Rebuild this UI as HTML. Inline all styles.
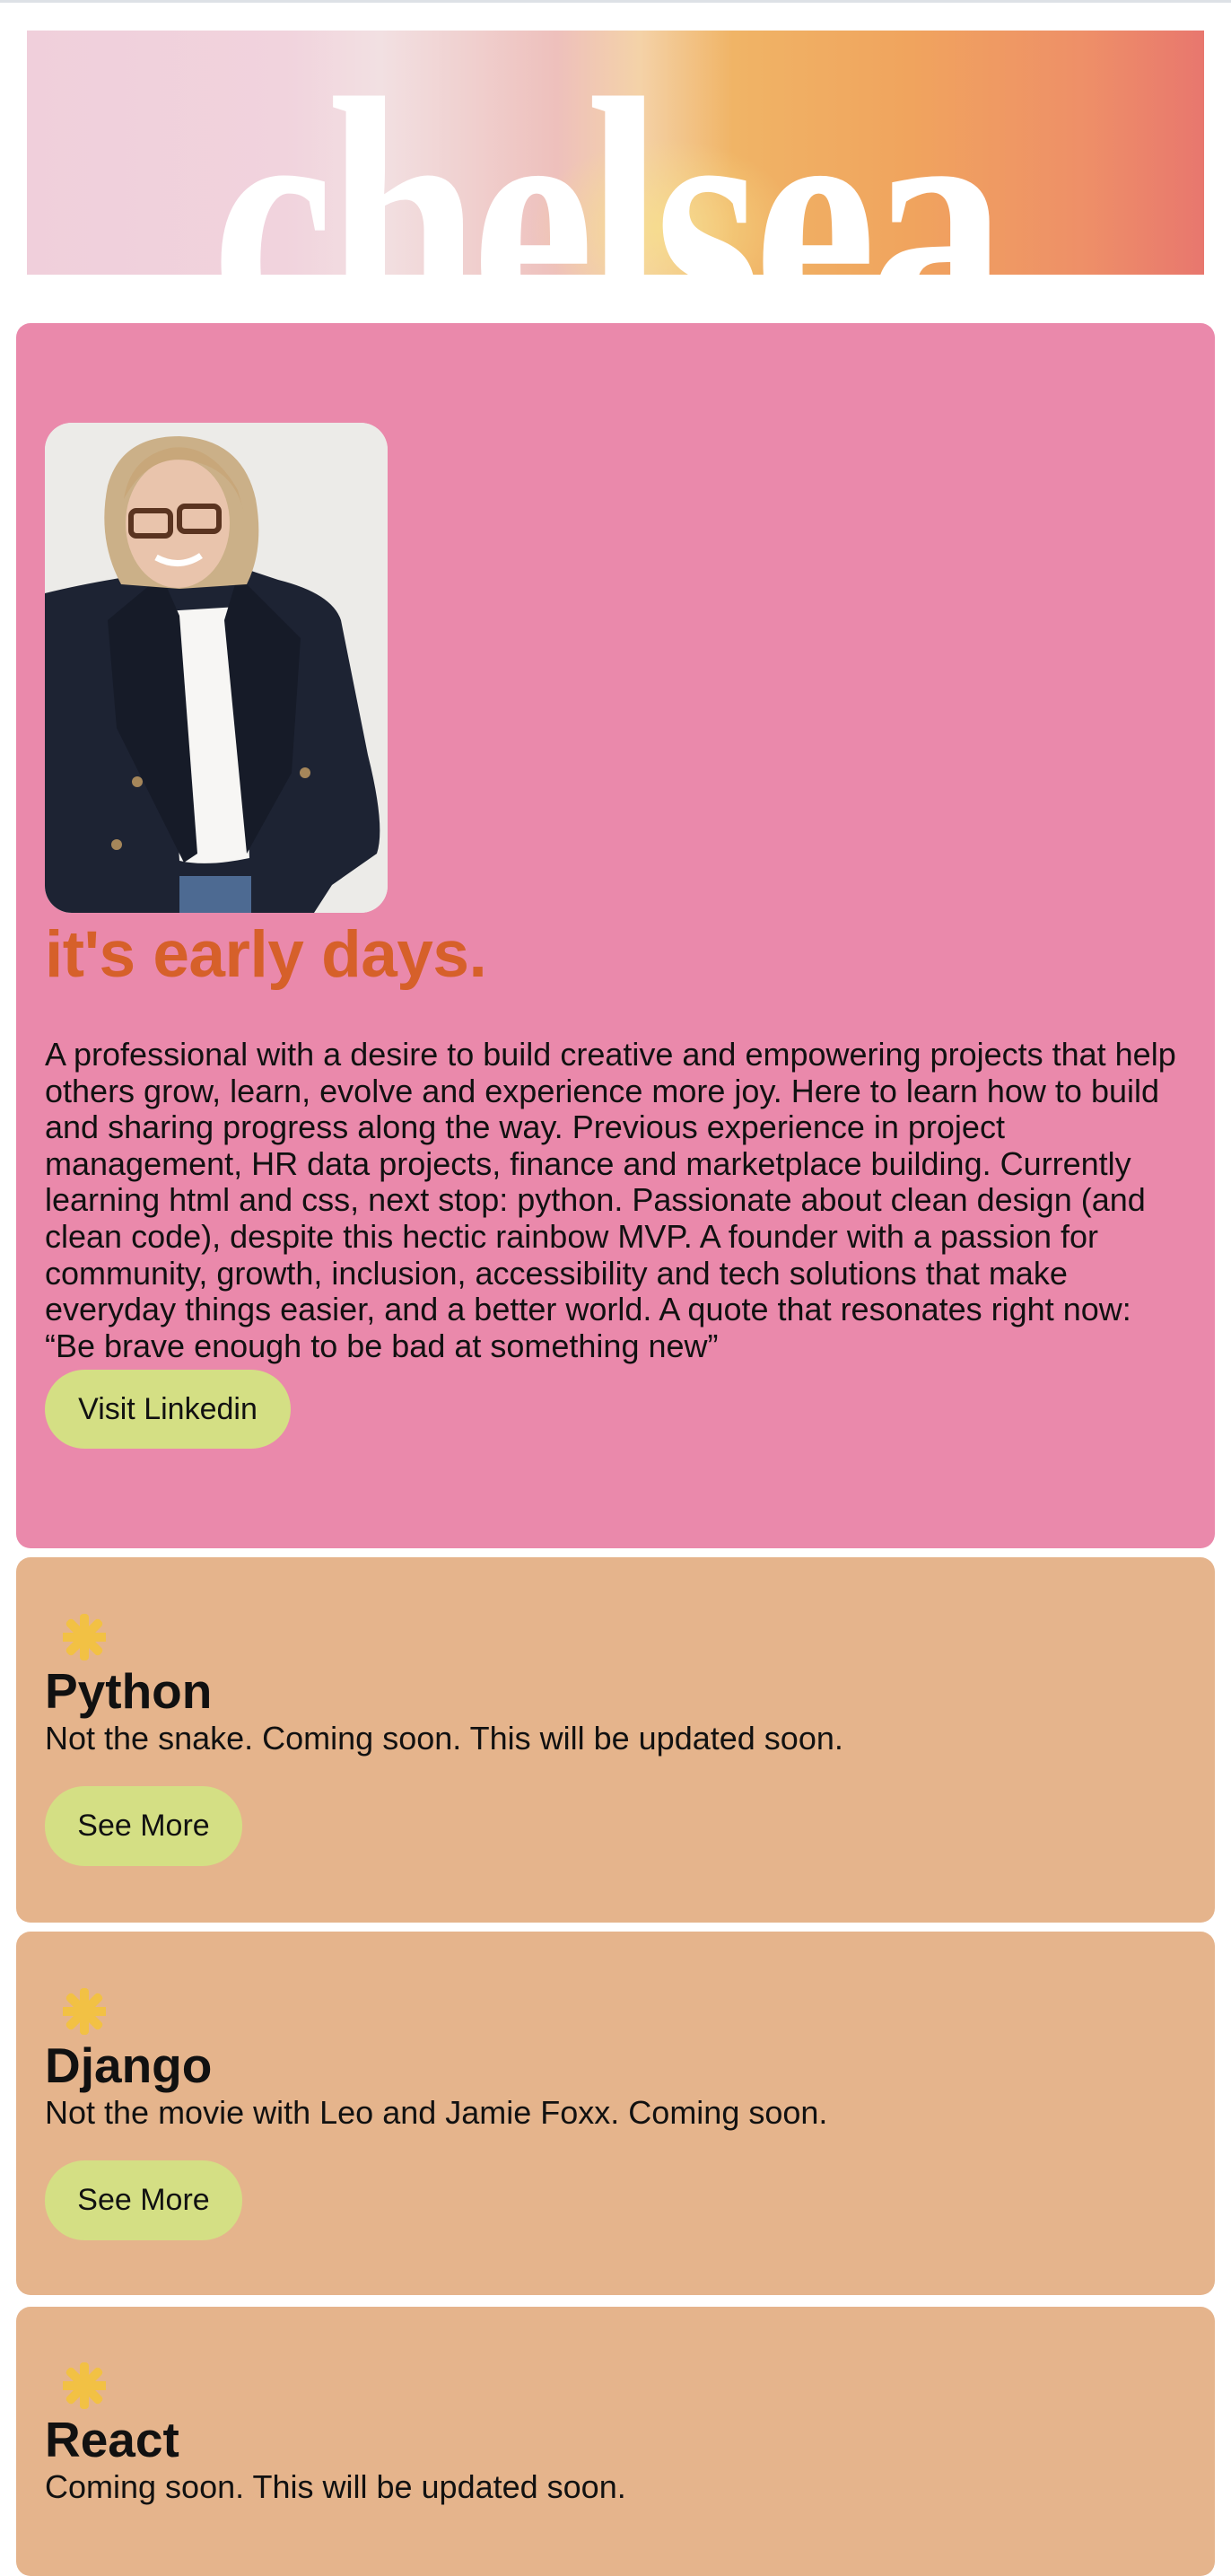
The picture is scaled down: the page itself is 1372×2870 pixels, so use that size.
<!DOCTYPE html>
<html><head><meta charset="utf-8">
<style>
*{margin:0;padding:0;box-sizing:border-box}
html,body{width:1372px;height:2812px;overflow:hidden;background:#fff;font-family:"Liberation Sans",Arial,sans-serif;color:#111}
.topline{position:absolute;left:0;top:0;width:1372px;height:3px;background:#dde1e6}
.banner{position:absolute;left:30px;top:34px;width:1312px;height:272px;overflow:hidden;
background:linear-gradient(90deg,#f0cfdb 0%,#f1d3dd 22%,#f2e0e2 30%,#eec0bc 45%,#f4d2a8 52%,#f0b466 60%,#f0a45e 75%,#ee8f68 90%,#e8776e 100%)}
.banner .glow{position:absolute;left:560px;top:120px;width:300px;height:200px;background:radial-gradient(ellipse at center,rgba(247,224,140,.8),rgba(247,224,140,0) 70%)}
.banner .word{position:absolute;left:206px;top:16px;font-family:"Liberation Serif",serif;font-weight:bold;font-size:400px;line-height:400px;color:#fff;transform:scaleX(.77);transform-origin:0 0;letter-spacing:-12px;white-space:nowrap}
.card{position:absolute;left:18px;width:1336px;border-radius:16px}
.pink{top:360px;height:1365px;background:#ea89ab}
.orange{background:#e5b48c}
.photo{position:absolute;left:50px;top:471px;width:382px;height:546px;border-radius:30px;overflow:hidden;background:#ecebe8}
h1{position:absolute;left:50px;top:1022px;font-size:73px;font-weight:bold;color:#d6602a;letter-spacing:-0.5px}
.para{position:absolute;left:50px;top:1155px;width:1262px;font-size:36px;line-height:40.6px}
.btn{position:absolute;left:50px;background:#d4df84;border-radius:44px;font-size:34px;display:flex;align-items:center;justify-content:center;color:#111}
.star{position:absolute;left:70px;width:48px;height:52px}
h2{position:absolute;left:50px;font-size:55px;font-weight:bold;color:#111}
.sub{position:absolute;left:50px;font-size:36px}
</style></head><body>
<div class="topline"></div>
<div class="banner"><div class="glow"></div><div class="word">chelsea</div></div>

<div class="card pink"></div>
<div class="photo">
<svg width="382" height="546" viewBox="0 0 382 546">
<rect width="382" height="546" fill="#ecebe8"/>
<path d="M0 190 Q40 180 90 172 L130 160 L150 175 L215 160 L260 175 Q320 190 330 220 L360 370 Q380 450 370 480 L320 515 L300 546 L0 546 Z" fill="#1d2333"/>
<path d="M133 210 L215 205 L228 485 Q180 495 150 488 Z" fill="#f7f6f4"/>
<path d="M130 170 L150 215 L170 480 L155 490 L80 340 L70 220 Z" fill="#161b28"/>
<path d="M215 170 L200 220 L225 480 L275 390 L285 240 Z" fill="#161b28"/>
<rect x="150" y="505" width="80" height="46" fill="#4d6a92"/>
<path d="M70 70 Q85 15 150 15 Q220 18 235 85 Q245 140 225 180 L150 185 L85 180 Q58 130 70 70 Z" fill="#cbb088"/>
<ellipse cx="148" cy="112" rx="58" ry="72" fill="#e9c4ac"/>
<path d="M88 85 Q115 35 160 42 Q210 50 222 100 L215 75 Q185 22 140 28 Q95 38 88 85 Z" fill="#c8a77a"/>
<rect x="96" y="98" width="44" height="28" rx="6" fill="none" stroke="#5a3420" stroke-width="6"/>
<rect x="150" y="93" width="44" height="28" rx="6" fill="none" stroke="#5a3420" stroke-width="6"/>
<path d="M124 150 Q150 164 174 148" stroke="#fff" stroke-width="7" fill="none"/>
<circle cx="103" cy="400" r="6" fill="#a5865a"/><circle cx="290" cy="390" r="6" fill="#a5865a"/><circle cx="80" cy="470" r="6" fill="#a5865a"/>
</svg></div>
<h1>it's early days.</h1>
<div class="para">A professional with a desire to build creative and empowering projects that help others grow, learn, evolve and experience more joy. Here to learn how to build and sharing progress along the way. Previous experience in project management, HR data projects, finance and marketplace building. Currently learning html and css, next stop: python. Passionate about clean design (and clean code), despite this hectic rainbow MVP. A founder with a passion for community, growth, inclusion, accessibility and tech solutions that make everyday things easier, and a better world. A quote that resonates right now: “Be brave enough to be bad at something new”</div>
<div class="btn" style="top:1526px;width:274px;height:88px">Visit Linkedin</div>

<svg width="0" height="0" style="position:absolute"><defs><symbol id="st" viewBox="0 0 48 52"><g fill="#f2c144"><rect x="19" y="0" width="10" height="52" rx="4"/><rect x="0" y="21" width="48" height="10"/><rect x="19" y="0" width="10" height="52" rx="4" transform="rotate(45 24 26)"/><rect x="19" y="0" width="10" height="52" rx="4" transform="rotate(-45 24 26)"/><circle cx="24" cy="26" r="11"/></g></symbol></defs></svg>

<div class="card orange" style="top:1735px;height:407px"></div>
<svg class="star" style="top:1798px" viewBox="0 0 48 52"><use href="#st"/></svg>
<h2 style="top:1852px">Python</h2>
<div class="sub" style="top:1916px">Not the snake. Coming soon. This will be updated soon.</div>
<div class="btn" style="top:1990px;width:220px;height:89px">See More</div>

<div class="card orange" style="top:2152px;height:405px"></div>
<svg class="star" style="top:2215px" viewBox="0 0 48 52"><use href="#st"/></svg>
<h2 style="top:2269px">Django</h2>
<div class="sub" style="top:2333px">Not the movie with Leo and Jamie Foxx. Coming soon.</div>
<div class="btn" style="top:2407px;width:220px;height:89px">See More</div>

<div class="card orange" style="top:2570px;height:300px"></div>
<svg class="star" style="top:2632px" viewBox="0 0 48 52"><use href="#st"/></svg>
<h2 style="top:2686px">React</h2>
<div class="sub" style="top:2750px">Coming soon. This will be updated soon.</div>
</body></html>
